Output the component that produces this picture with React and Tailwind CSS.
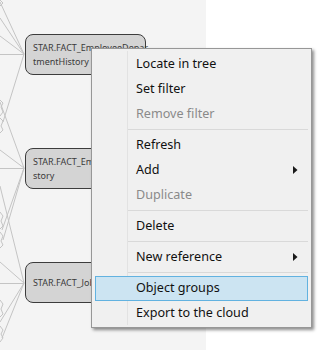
import React from "react";

const lineColor = "#c4c4c4";

function Arrow() {
  return (
    <svg width="5" height="8" viewBox="0 0 5 8" className="absolute right-[9px] top-1/2 -translate-y-1/2">
      <path d="M0 0 L4.5 4 L0 8 Z" fill="#1a1a1a" />
    </svg>
  );
}

function Item({ label, disabled, sub, active }) {
  return (
    <div
      className={
        "relative mx-[3px] h-[25px] flex items-center border " +
        (active ? "bg-[#cce4f2] border-[#62b2e0]" : "border-transparent")
      }
    >
      <span
        className={
          "pl-[40px] text-[12.6px] leading-none " +
          (disabled ? "text-[#8a8a8a]" : "text-[#111]")
        }
      >
        {label}
      </span>
      {sub && <Arrow />}
    </div>
  );
}

function Sep() {
  return <div className="h-[6px] flex items-center pl-[36px] pr-[3px]"><div className="h-px w-full bg-[#d9d9d9]" /></div>;
}

function Node({ top, children, center }) {
  return (
    <div
      className={
        "absolute left-[25px] w-[121px] h-[41px] rounded-[8px] border-[1.5px] border-[#3c3c3c] bg-[#d4d4d4] text-[9px] leading-[14px] text-[#3a3a3a] px-[7px] flex flex-col justify-center " +
        (center ? "items-center" : "")
      }
      style={{ top }}
    >
      {children}
    </div>
  );
}

export default function App() {
  return (
    <div
      className="relative w-[326px] h-[350px] flex overflow-hidden bg-white"
      style={{ fontFamily: '"Noto Sans", "Open Sans", sans-serif' }}
    >
      <div className="relative w-[206px] h-full bg-[#f4f4f4]">
        <svg className="absolute inset-0" width="206" height="350">
          <g stroke={lineColor} strokeWidth="1" fill="none">
            <line x1="0" y1="2" x2="24" y2="54" />
            <line x1="0" y1="18" x2="24" y2="54" />
            <line x1="0" y1="36" x2="24" y2="54" />
            <line x1="0" y1="54.5" x2="24" y2="54.5" />
            <line x1="24" y1="54" x2="3" y2="122" />
            <line x1="0" y1="102" x2="24" y2="168" />
            <line x1="0" y1="150" x2="24" y2="168" />
            <line x1="0" y1="168.5" x2="24" y2="168.5" />
            <line x1="24" y1="168" x2="2" y2="230" />
            <line x1="24" y1="168" x2="3" y2="240" />
            <line x1="0" y1="186" x2="24" y2="283" />
            <line x1="0" y1="262" x2="24" y2="283" />
            <line x1="0" y1="283.5" x2="24" y2="283.5" />
            <line x1="24" y1="283" x2="0" y2="322" />
            <line x1="24" y1="283" x2="2" y2="338" />
            <polyline points="0,100 3,103 1,107 3,112 0,116" />
            <polyline points="0,118 3,121 1,126 3,130 0,133" />
            <polyline points="0,212 3,216 1,221 3,226 0,229" />
            <polyline points="0,232 3,236 1,241 3,245 0,248" />
            <polyline points="0,300 3,304 1,309 3,314 0,317" />
            <polyline points="0,326 3,330 1,334 3,338 0,342" />
            <polyline points="0,6 3,3 0,0" />
          </g>
        </svg>
        <Node top={34}>
          <span className="whitespace-nowrap">STAR.FACT_EmployeeDepar</span>
          <span>tmentHistory</span>
        </Node>
        <Node top={148}>
          <span className="whitespace-nowrap">STAR.FACT_EmployeePayHi</span>
          <span>story</span>
        </Node>
        <Node top={262} center>
          <span className="whitespace-nowrap">STAR.FACT_JobCandidate</span>
        </Node>
      </div>
      <div className="flex-1" />

      <div className="absolute left-[91px] top-[48px] w-[221px] h-[280px] bg-[#f0f0f0] border border-[#979797] shadow-[2px_2px_3px_rgba(0,0,0,0.45)] pt-[2.5px]">
        <div className="absolute left-[35px] top-[2px] bottom-[2px] w-px bg-[#e2e2e2]" />
        <Item label="Locate in tree" />
        <Item label="Set filter" />
        <Item label="Remove filter" disabled />
        <Sep />
        <Item label="Refresh" />
        <Item label="Add" sub />
        <Item label="Duplicate" disabled />
        <Sep />
        <Item label="Delete" />
        <Sep />
        <Item label="New reference" sub />
        <Sep />
        <Item label="Object groups" active />
        <Item label="Export to the cloud" />
      </div>
    </div>
  );
}
